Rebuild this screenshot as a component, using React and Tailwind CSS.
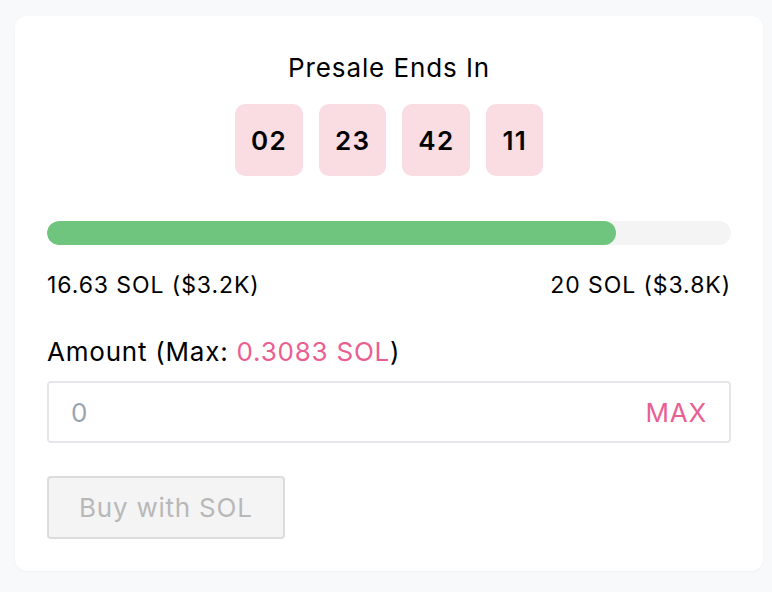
import { useState } from "react";

const RAISED = 16.63;
const GOAL = 20;

export default function App() {
  const [amount, setAmount] = useState("");
  const countdown = ["02", "23", "42", "11"];
  const pct = (RAISED / GOAL) * 100;

  return (
    <div
      className="min-h-screen bg-[#f8f9fb] pt-4 pb-5 pl-[15px] pr-[9px] text-black"
      style={{ fontFamily: "Inter, 'Noto Sans', sans-serif" }}
    >
      <div className="rounded-xl bg-white p-8 shadow-[0_1px_3px_rgba(0,0,0,0.04)]">
        {/* countdown */}
        <h2 className="mt-1 text-center text-[26px] leading-8 font-normal tracking-[0.035em]">
          Presale Ends In
        </h2>
        <div className="mt-5 flex justify-center gap-4">
          {countdown.map((v, i) => (
            <div
              key={i}
              className="flex h-[72px] items-center rounded-[10px] bg-[#fadde2] px-4 text-[26px] font-semibold tracking-[0.05em]"
            >
              {v}
            </div>
          ))}
        </div>

        {/* progress */}
        <div className="mt-[45px] h-6 w-full overflow-hidden rounded-full bg-[#f4f4f4]">
          <div className="h-full rounded-full bg-[#6fc57e]" style={{ width: `${pct}%` }} />
        </div>
        <div className="mt-[26px] flex justify-between text-[23px] leading-7 tracking-[0.04em]">
          <span>16.63 SOL ($3.2K)</span>
          <span>20 SOL ($3.8K)</span>
        </div>

        {/* amount */}
        <div className="mt-[37px] text-[26px] leading-8 tracking-[0.03em]">
          Amount (Max: <span className="text-[#ea5f92]">0.3083 SOL</span>)
        </div>
        <div className="mt-[13px] flex h-[62px] items-center rounded border-2 border-[#e5e6ea] px-[22px]">
          <input
            value={amount}
            onChange={(e) => setAmount(e.target.value)}
            placeholder="0"
            className="min-w-0 flex-1 bg-transparent text-[26px] tracking-[0.03em] outline-none placeholder:text-[#9ca3af]"
          />
          <button className="text-[26px] tracking-[0.03em] text-[#ea5f92]">MAX</button>
        </div>

        <button
          disabled
          className="mt-[33px] h-[63px] rounded border-2 border-[#dcdcdc] bg-[#f4f4f4] px-[30px] text-[26px] tracking-[0.03em] text-[#b8b8b8]"
        >
          Buy with SOL
        </button>
      </div>
    </div>
  );
}
